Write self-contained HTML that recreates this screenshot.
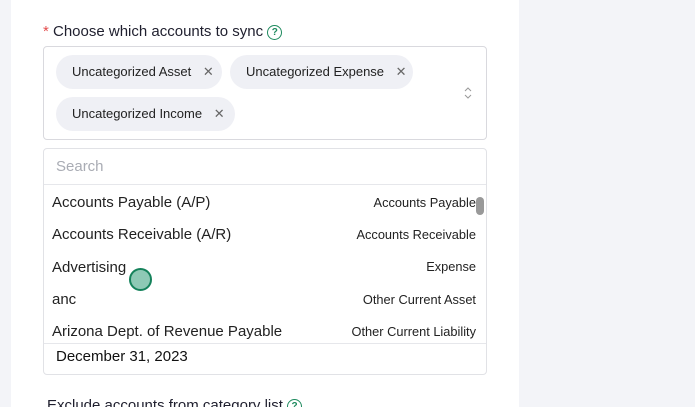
<!DOCTYPE html>
<html><head><style>
html,body{margin:0;width:695px;height:407px;overflow:hidden}
body{background:#f3f4f8;font-family:"Liberation Sans",sans-serif;color:#1f1f2e;position:relative}
.card{position:absolute;left:11px;top:0;width:508px;height:407px;background:#fff}
.a{position:absolute;white-space:nowrap}
.chip{position:absolute;height:34px;background:#eff0f5;border-radius:17px;font-size:13px;line-height:34px;padding-left:16px;box-sizing:border-box;color:#222}
.chip span{color:#666;margin-left:8px;font-size:13px}
.row{position:absolute;left:52px;font-size:15px;color:#222}
.typ{position:absolute;right:219px;font-size:12.8px;color:#222}
.help{display:inline-block;width:13px;height:13px;border:1.5px solid #1e8a5e;border-radius:50%;color:#1e8a5e;font-size:10px;line-height:13px;text-align:center;font-weight:bold;vertical-align:1px}
</style></head><body>
<div class="card"></div>
<div class="a" style="left:43px;top:23px;font-size:15px"><span style="color:#e34d4d">*</span> Choose which accounts to sync <span class="help">?</span></div>
<div class="a" style="left:43px;top:46px;width:442px;height:92px;border:1px solid #d9d9de;border-radius:4px"></div>
<div class="chip" style="left:56px;top:55px;width:166px">Uncategorized Asset <span>✕</span></div>
<div class="chip" style="left:230px;top:55px;width:183px">Uncategorized Expense <span>✕</span></div>
<div class="chip" style="left:56px;top:97px;width:179px">Uncategorized Income <span>✕</span></div>
<svg class="a" style="left:463px;top:86px" width="10" height="14"><path d="M2 5 L5 2 L8 5 M2 9 L5 12 L8 9" stroke="#999" fill="none" stroke-width="1"/></svg>
<div class="a" style="left:43px;top:148px;width:442px;height:225px;border:1px solid #e1e2e6;border-radius:4px"></div>
<div class="a" style="left:44px;top:184px;width:442px;height:1px;background:#e6e7eb"></div>
<div class="a" style="left:56px;top:158px;font-size:15px;color:#a9acb4">Search</div>
<div class="row" style="top:194px">Accounts Payable (A/P)</div><div class="typ" style="top:195px">Accounts Payable</div>
<div class="row" style="top:226px">Accounts Receivable (A/R)</div><div class="typ" style="top:227px">Accounts Receivable</div>
<div class="row" style="top:259px">Advertising</div><div class="typ" style="top:259px">Expense</div>
<div class="row" style="top:291px">anc</div><div class="typ" style="top:292px">Other Current Asset</div>
<div class="row" style="top:323px">Arizona Dept. of Revenue Payable</div><div class="typ" style="top:324px">Other Current Liability</div>
<div class="a" style="left:476px;top:197px;width:8px;height:18px;background:#999;border-radius:4px"></div>
<div class="a" style="left:44px;top:343px;width:442px;height:1px;background:#e6e7eb"></div>
<div class="a" style="left:56px;top:348px;font-size:15px;color:#111">December 31, 2023</div>
<div class="a" style="left:129px;top:268px;width:23px;height:23px;border-radius:50%;background:#8ec9b5;border:2.5px solid #15825b;box-sizing:border-box"></div>
<div class="a" style="left:47px;top:397px;font-size:15px">Exclude accounts from category list <span class="help">?</span></div>
</body></html>
